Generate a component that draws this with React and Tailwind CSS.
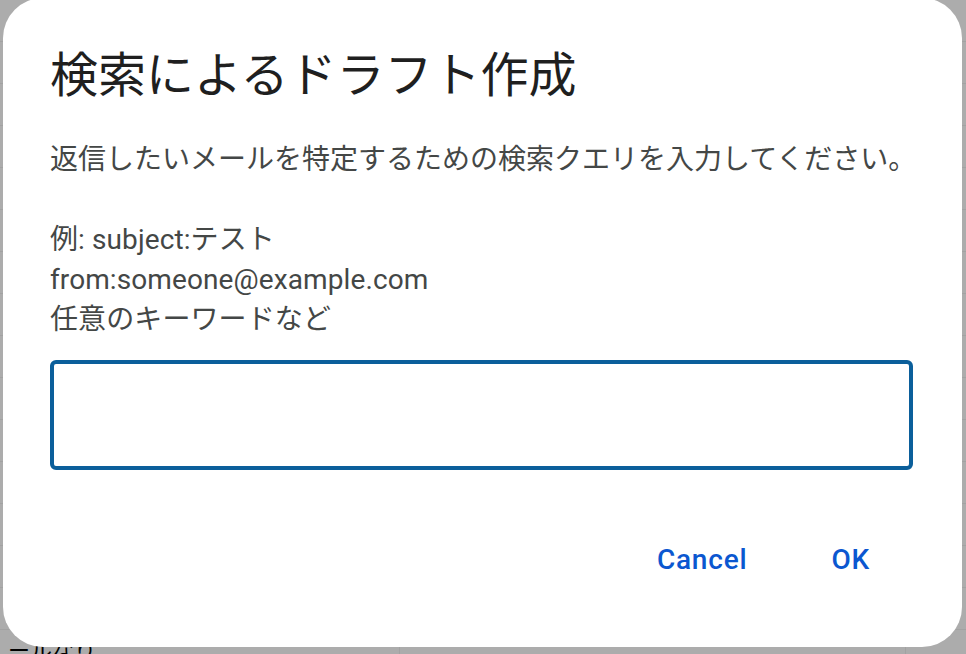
const rows = Array.from({ length: 16 });

function Sheet() {
  return (
    <div className="flex flex-col w-full h-full bg-[#acacac]">
      {rows.map((_, i) => (
        <div key={i} className="flex h-[42px] shrink-0 border-b border-[#a2a2a2]">
          <div className="w-[400px] border-r border-[#a2a2a2] pl-[8px] text-[22px] leading-[42px] text-black overflow-hidden whitespace-nowrap">
            {i === 15 ? "ールなり" : ""}
          </div>
          <div className="w-[506px] border-r border-[#a2a2a2]"></div>
          <div className="flex-1"></div>
        </div>
      ))}
    </div>
  );
}

export default function App() {
  return (
    <div
      className="relative w-[966px] h-[654px] overflow-hidden"
      style={{ fontFamily: 'Roboto, "Noto Sans CJK JP", sans-serif' }}
    >
      <Sheet />
      <div className="absolute left-[3px] top-[-2px] w-[959px] h-[649px] bg-white rounded-[40px] pl-[47px] pr-[49px] pt-[50px] flex flex-col">
        <h1 className="text-[48px] leading-[56px] text-[#1f1f1f] font-normal">
          検索によるドラフト作成
        </h1>
        <p className="mt-[36px] text-[28px] leading-[40px] text-[#444746] whitespace-nowrap">
          返信したいメールを特定するための検索クエリを入力してください。
        </p>
        <div className="mt-[40px] text-[28px] leading-[40px] text-[#444746] tracking-[0.1px]">
          <p>例: subject:テスト</p>
          <p>from:someone@example.com</p>
          <p>任意のキーワードなど</p>
        </div>
        <input
          type="text"
          className="mt-[20px] h-[110px] w-full border-4 border-[#0b5f9b] rounded-[6px] outline-none px-4 text-[28px]"
        />
        <div className="mt-[68px] flex justify-end gap-[44px] pr-[23px]">
          <button className="px-[20px] text-[28px] leading-[44px] font-medium tracking-[0.8px] text-[#0b57d0]">
            Cancel
          </button>
          <button className="px-[20px] text-[28px] leading-[44px] font-medium tracking-[0.8px] text-[#0b57d0]">
            OK
          </button>
        </div>
      </div>
    </div>
  );
}
